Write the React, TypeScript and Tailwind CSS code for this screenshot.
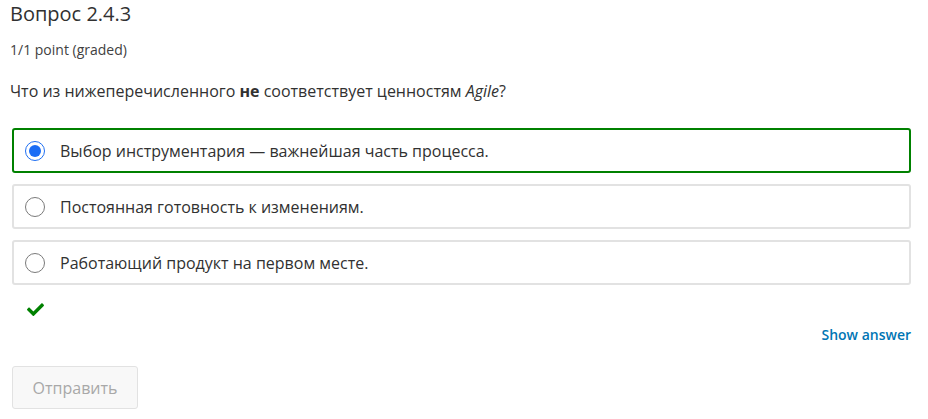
import React from "react";

function Radio({ checked }: { checked: boolean }) {
  if (checked) {
    return (
      <span className="flex h-[20px] w-[20px] shrink-0 items-center justify-center rounded-full border border-[#1f6ff2] bg-white">
        <span className="block h-[12px] w-[12px] rounded-full bg-[#1a6cf5]" />
      </span>
    );
  }
  return <span className="block h-[20px] w-[20px] shrink-0 rounded-full border border-[#7a7a7a] bg-white" />;
}

function Option({ text, checked, correct }: { text: string; checked: boolean; correct?: boolean }) {
  return (
    <div
      className={`ml-[2px] flex h-[45px] items-center rounded-[3px] border-2 pl-[11px] ${
        correct ? "border-[#008100]" : "border-[#e2e2e2]"
      }`}
    >
      <Radio checked={checked} />
      <span className="ml-[15px] text-[16px] leading-[22px] text-[#313131]">{text}</span>
    </div>
  );
}

export default function App() {
  return (
    <div
      className="min-h-[419px] w-[928px] bg-white pl-[10px] pr-[17px] text-[#313131]"
      style={{ fontFamily: '"Open Sans", "DejaVu Sans", sans-serif' }}
    >
      <h2 className="text-[20px] font-normal leading-[28px] text-[#313131]">Вопрос 2.4.3</h2>
      <div className="mt-[12px] text-[14px] leading-[20px] text-[#414141]">1/1 point (graded)</div>
      <p className="mt-[19px] text-[16px] leading-[24px] text-[#313131]">
        Что из нижеперечисленного <b className="font-bold">не</b> соответствует ценностям <i>Agile</i>?
      </p>
      <div className="mt-[25px] flex flex-col gap-[11px]">
        <Option text="Выбор инструментария — важнейшая часть процесса." checked correct />
        <Option text="Постоянная готовность к изменениям." checked={false} />
        <Option text="Работающий продукт на первом месте." checked={false} />
      </div>
      <div className="mt-[18px] ml-[17px] h-[13px]">
        <svg width="17" height="13" viewBox="0 0 512 392" className="block">
          <path
            fill="#008100"
            d="M173.9 382.6L7.5 216.2c-10-10-10-26.2 0-36.2l36.2-36.2c10-10 26.2-10 36.2 0L192 255.9 432.1 15.8c10-10 26.2-10 36.2 0l36.2 36.2c10 10 10 26.2 0 36.2L210.1 382.6c-10 10-26.2 10-36.2 0z"
          />
        </svg>
      </div>
      <div className="mt-[9px] flex justify-end">
        <button className="text-[14px] font-semibold leading-[20px] text-[#0075b4]">Show answer</button>
      </div>
      <button className="mt-[21px] ml-[2px] h-[43px] w-[126px] rounded-[3px] border border-[#e2e2e2] bg-[#f8f8f8] text-[16px] text-[#a8a8a8]">
        Отправить
      </button>
    </div>
  );
}
